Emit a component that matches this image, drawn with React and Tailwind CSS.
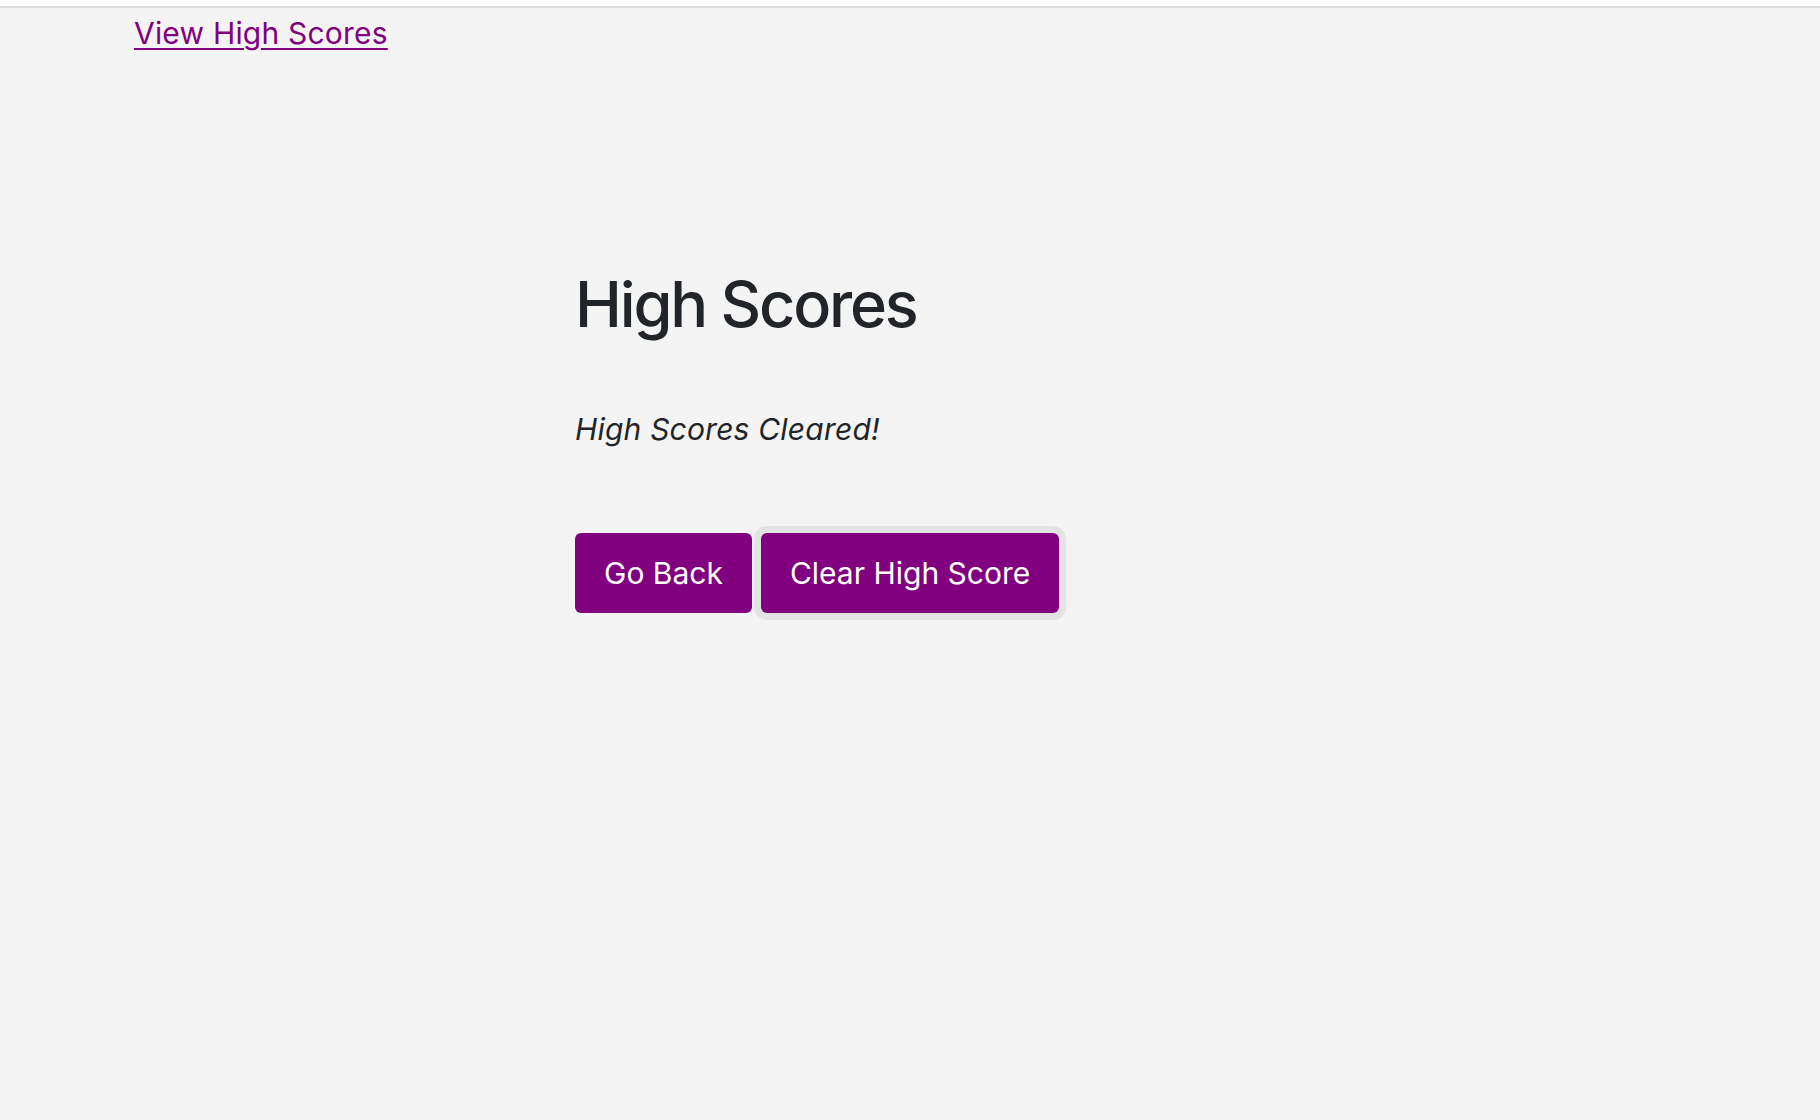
export default function App() {
  return (
    <div className="min-h-screen bg-white font-['Inter',sans-serif] text-[#212529]">
      <div className="h-[6px] bg-white" />
      <div className="h-[2px] bg-[#dcdcdc]" />
      <div className="min-h-[1112px] bg-[#f4f4f4]">
        <header className="pl-[134px] pt-[5px]">
          <a
            href="#"
            className="text-[30px] leading-[40px] tracking-[0.2px] text-[#800080] underline decoration-[2px] underline-offset-[4px]"
          >
            View High Scores
          </a>
        </header>

        <main className="mx-auto w-[670px] pt-[213px]">
          <h1 className="text-[63px] leading-[76px] font-medium tracking-[-2.2px]">High Scores</h1>
          <p className="mt-[67px] text-[30px] italic leading-[40px] tracking-[0.2px]">High Scores Cleared!</p>
          <div className="mt-[84px] flex gap-[9px]">
            <button className="h-[80px] rounded-[6px] bg-[#800080] px-[29px] text-[30px] text-white">
              Go Back
            </button>
            <button className="h-[80px] rounded-[6px] bg-[#800080] px-[29px] text-[30px] text-white ring-[7px] ring-[#e3e3e3]">
              Clear High Score
            </button>
          </div>
        </main>
      </div>
    </div>
  );
}
